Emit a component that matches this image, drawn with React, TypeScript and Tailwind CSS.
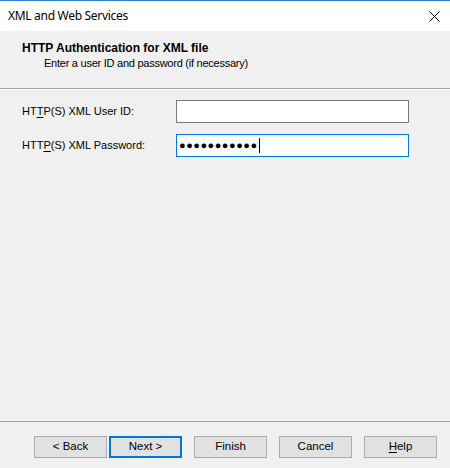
import { FC } from 'react';

const buttons = [
  { label: '< Back' },
  { label: 'Next >', focused: true },
  { label: 'Finish' },
  { label: 'Cancel' },
  { label: 'Help', accessKey: 'H' },
];

const Label: FC<{ before: string; key_: string; after: string }> = ({ before, key_, after }) => (
  <span className="w-[154px] shrink-0 text-[11px] text-black">
    {before}
    <span className="underline underline-offset-2">{key_}</span>
    {after}
  </span>
);

const App: FC = () => {
  return (
    <div
      className="w-[450px] h-[468px] bg-[#f0f0f0] flex flex-col overflow-hidden"
      style={{ fontFamily: '"Liberation Sans", Arial, sans-serif' }}
    >
      {/* title bar */}
      <div className="h-[31px] shrink-0 bg-white border-t border-[#2b7fd0] flex items-center justify-between pl-[8px] pr-[10px]">
        <span
          className="text-[12px] tracking-[-0.3px] text-black"
          style={{ fontFamily: '"Noto Sans", "Open Sans", sans-serif' }}
        >
          XML and Web Services
        </span>
        <svg width="11" height="11" viewBox="0 0 11 11">
          <path d="M0.5 0.5L10.5 10.5M10.5 0.5L0.5 10.5" stroke="#000" strokeWidth="1" />
        </svg>
      </div>

      {/* wizard header */}
      <div className="h-[57px] shrink-0 pt-[10px] pl-[22px] leading-[15px]">
        <p className="text-[12px] font-bold text-black">HTTP Authentication for XML file</p>
        <p className="text-[11px] tracking-[-0.25px] text-black pl-[22px]">Enter a user ID and password (if necessary)</p>
      </div>
      <div className="h-px bg-[#a0a0a0] shrink-0" />
      <div className="h-px bg-white shrink-0" />

      {/* fields */}
      <div className="flex-1 pl-[22px] pt-[10px] flex flex-col gap-[11px]">
        <div className="flex items-center">
          <Label before="HT" key_="T" after="P(S) XML User ID:" />
          <div className="w-[233px] h-[23px] bg-white border border-[#7a7a7a]" />
        </div>
        <div className="flex items-center">
          <Label before="HTT" key_="P" after="(S) XML Password:" />
          <div className="w-[233px] h-[23px] bg-white border border-[#0078d7] flex items-center pl-[2px]">
            <span className="text-[11px] tracking-[0.5px] text-black leading-none">●●●●●●●●●●●</span>
            <span className="w-px h-[15px] bg-black ml-[1px]" />
          </div>
        </div>
      </div>

      {/* footer */}
      <div className="h-px bg-[#a0a0a0] shrink-0" />
      <div className="h-[46px] shrink-0 pt-[14px] pl-[34px] flex items-start">
        {buttons.map((b, i) => (
          <div
            key={b.label}
            className={
              'w-[73px] h-[22px] flex items-center justify-center text-[11.5px] text-black bg-[#e1e1e1] ' +
              (b.focused ? 'border-2 border-[#0078d7] ml-[2px] ' : 'border border-[#adadad] ') +
              (i >= 2 ? 'ml-[12px]' : '')
            }
          >
            {b.accessKey ? (
              <>
                <span className="underline underline-offset-2">{b.accessKey}</span>
                {b.label.slice(1)}
              </>
            ) : (
              b.label
            )}
          </div>
        ))}
      </div>
    </div>
  );
};

export default App;
